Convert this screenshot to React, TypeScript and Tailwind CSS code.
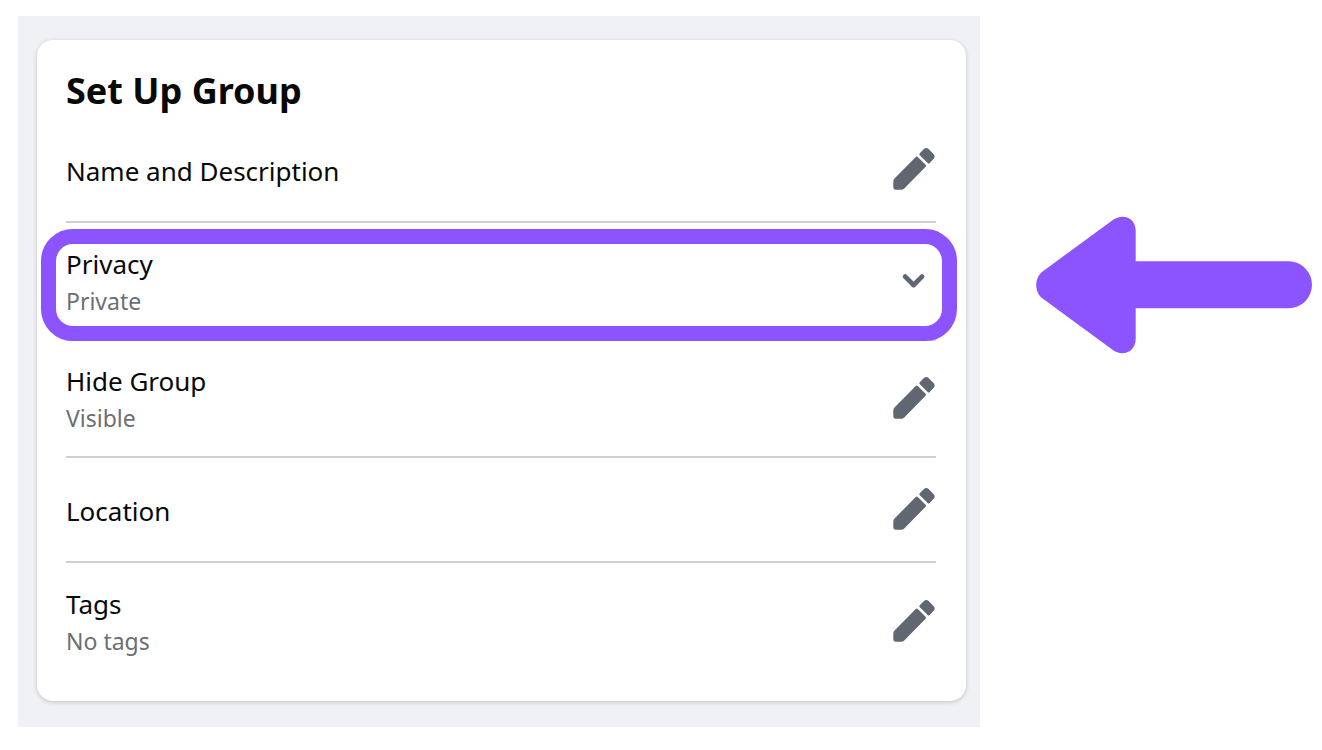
function PencilIcon() {
  return (
    <svg className="h-[42px] w-[42px]" viewBox="0 0 42 42" fill="currentColor" aria-hidden="true">
      <path d="M22.8 8.9Q23.8 8 24.8 8.9L32.6 16.7Q33.5 17.7 32.6 18.7L11 40.7Q10 41.7 8.4 41.7H2.4Q.3 41.7 .3 39.6V33.4Q.3 31.8 1.5 30.6Z" />
      <path d="M26.8 7.2Q25.9 6.2 26.8 5.2L30.9 1.1Q33.2-.9 35.6 1.1L40.5 6Q42.6 8.4 40.9 10.4L36.7 14.9Q35.7 15.9 34.7 14.9Z" />
    </svg>
  );
}

function ChevronIcon() {
  return (
    <svg className="h-4 w-6" viewBox="0 0 24 16" fill="none" stroke="currentColor" strokeWidth="4.8" strokeLinecap="round" strokeLinejoin="round" aria-hidden="true">
      <path d="M3.2 3.6 11.6 12 20 3.6" />
    </svg>
  );
}

function ArrowLeft() {
  return (
    <svg className="mt-[216px] h-[138px] w-[276px] shrink-0 text-[#8c54ff]" viewBox="0 0 276 138" fill="currentColor" aria-hidden="true">
      <path d="M6.3 55.7 76.5 4.2C85 -2.5 99.7 0 99.7 15V45.3H252.5A23.5 23.5 0 0 1 252.5 92.3H99.7V122.5C99.7 137.5 85 140.5 76.5 133.8L6.3 82.3C-1.8 76 -1.8 62 6.3 55.7Z" />
    </svg>
  );
}

type Setting = { label: string; value?: string; expandable?: boolean };

const settings: Setting[] = [
  { label: "Name and Description" },
  { label: "Privacy", value: "Private", expandable: true },
  { label: "Hide Group", value: "Visible" },
  { label: "Location" },
  { label: "Tags", value: "No tags" },
];

function rowHeight({ value, expandable }: Setting) {
  if (expandable) return "min-h-[118px]";
  return value ? "min-h-[117px]" : "min-h-[105px]";
}

function SettingRow(setting: Setting) {
  const { label, value, expandable } = setting;
  return (
    <li
      className={`relative flex items-center justify-between border-b-2 border-[#ced0d4] last:border-b-0 ${rowHeight(setting)}`}
    >
      <div className="pt-[3px]">
        <div className="text-[26px] leading-[37px] text-[#080809]">{label}</div>
        {value && <div className="text-[23px] leading-[37px] text-[#6c6f74]">{value}</div>}
      </div>
      <button
        type="button"
        aria-label={expandable ? `Expand ${label}` : `Edit ${label}`}
        className={`flex w-11 cursor-pointer items-center justify-center text-[#606770] ${expandable ? "" : "pb-0.5"}`}
      >
        {expandable ? <ChevronIcon /> : <PencilIcon />}
      </button>
      {expandable && (
        <div className="pointer-events-none absolute -bottom-0.5 -left-[25px] -right-[21px] top-1.5 rounded-[32px] border-[15px] border-[#8c54ff]" />
      )}
    </li>
  );
}

export default function App() {
  return (
    <main className="flex min-h-screen items-start gap-14 bg-white pl-[18px] pr-2.5 font-['Noto_Sans','Open_Sans',sans-serif]">
      <div className="mt-4 flex-1 bg-[#f0f1f5] pb-[26px] pl-[19px] pr-3.5 pt-6">
        <section className="rounded-2xl bg-white pb-[21px] pl-[29px] pr-[30px] pt-6 shadow-[0_1px_4px_rgba(0,0,0,0.2)]">
          <h1 className="text-[36px] font-bold leading-[54px] text-[#080809]">Set Up Group</h1>
          <ul>
            {settings.map((s) => (
              <SettingRow key={s.label} {...s} />
            ))}
          </ul>
        </section>
      </div>
      <ArrowLeft />
    </main>
  );
}
